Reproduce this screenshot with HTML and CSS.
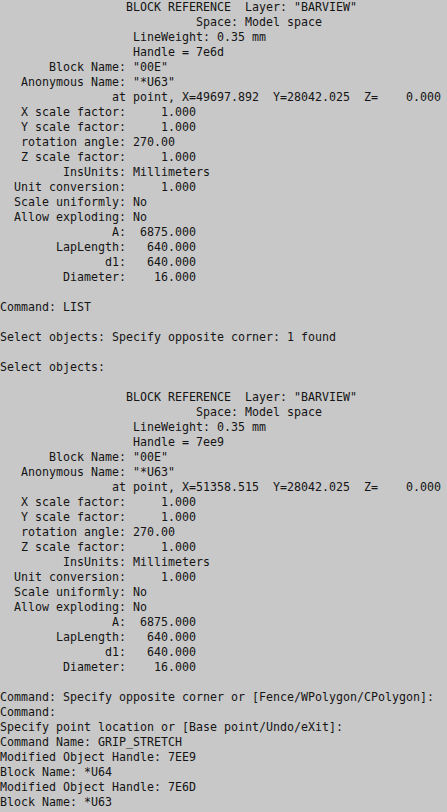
FILE: index.html
```html
<!DOCTYPE html>
<html>
<head>
<meta charset="utf-8">
<link rel="stylesheet" href="styles.css">
</head>
<body>
<pre class="console">                  BLOCK REFERENCE  Layer: "BARVIEW"
                            Space: Model space
                   LineWeight: 0.35 mm
                   Handle = 7e6d
       Block Name: "00E"
   Anonymous Name: "*U63"
                at point, X=49697.892  Y=28042.025  Z=    0.000
   X scale factor:     1.000
   Y scale factor:     1.000
   rotation angle: 270.00
   Z scale factor:     1.000
         InsUnits: Millimeters
  Unit conversion:     1.000
  Scale uniformly: No
  Allow exploding: No
                A:  6875.000
        LapLength:   640.000
               d1:   640.000
         Diameter:    16.000

Command: LIST

Select objects: Specify opposite corner: 1 found

Select objects:

                  BLOCK REFERENCE  Layer: "BARVIEW"
                            Space: Model space
                   LineWeight: 0.35 mm
                   Handle = 7ee9
       Block Name: "00E"
   Anonymous Name: "*U63"
                at point, X=51358.515  Y=28042.025  Z=    0.000
   X scale factor:     1.000
   Y scale factor:     1.000
   rotation angle: 270.00
   Z scale factor:     1.000
         InsUnits: Millimeters
  Unit conversion:     1.000
  Scale uniformly: No
  Allow exploding: No
                A:  6875.000
        LapLength:   640.000
               d1:   640.000
         Diameter:    16.000

Command: Specify opposite corner or [Fence/WPolygon/CPolygon]:
Command:
Specify point location or [Base point/Undo/eXit]:
Command Name: GRIP_STRETCH
Modified Object Handle: 7EE9
Block Name: *U64
Modified Object Handle: 7E6D
Block Name: *U63</pre>
</body>
</html>
```
FILE: styles.css
```css
html, body {
  margin: 0;
  padding: 0;
  background: #c8c8c8;
  overflow: hidden;
}
.console {
  margin: 0;
  padding: 0;
  font-family: "DejaVu Sans Mono", "Liberation Mono", monospace;
  font-size: 11.63px;
  line-height: 15px;
  color: #141414;
  white-space: pre;
}
```
